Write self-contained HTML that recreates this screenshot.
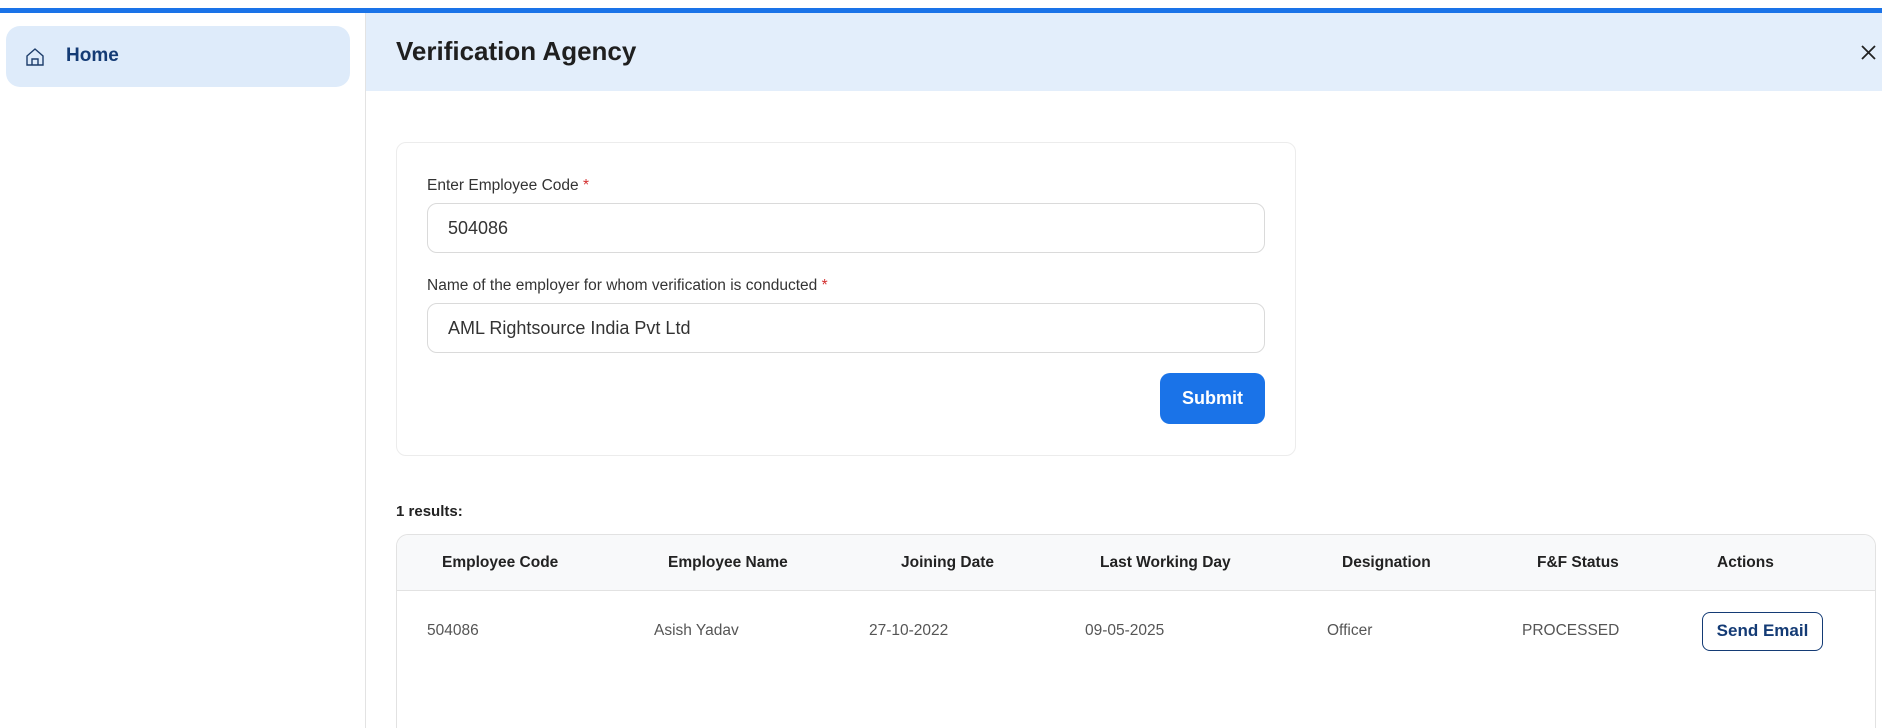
<!DOCTYPE html>
<html style="width:1882px;height:728px;overflow:hidden"><head><style>
*{box-sizing:border-box;margin:0;padding:0}
body{width:1882px;height:728px;background:#fff;font-family:"Liberation Sans",sans-serif;position:relative;overflow:hidden;color:#222}
.a{position:absolute}
</style></head><body>
<div class="a" style="left:0;top:8px;width:1882px;height:5px;background:#1a73e8"></div>
<div class="a" style="left:365px;top:13px;width:1px;height:715px;background:#e3e3e3"></div>
<div class="a" style="left:6px;top:26px;width:344px;height:61px;background:#deebfa;border-radius:14px"></div>
<svg class="a" style="left:24px;top:46px" width="22" height="22" viewBox="0 0 22 22" fill="none" stroke="#1d3d6b" stroke-width="1.4"><path d="M3 10 L11 3 L19 10 V19 H3 Z"/><path d="M8 19 V13 H14 V19"/></svg>
<div class="a" style="left:66px;top:45px;font-size:19px;font-weight:bold;color:#143b75">Home</div>
<div class="a" style="left:366px;top:13px;width:1516px;height:78px;background:#e3eefb"></div>
<div class="a" style="left:396px;top:36px;font-size:26px;font-weight:bold;color:#1f1f1f">Verification Agency</div>
<svg class="a" style="left:1861px;top:45px" width="15" height="15" viewBox="0 0 15 15" stroke="#222" stroke-width="1.8"><path d="M1 1 L14 14 M14 1 L1 14"/></svg>
<div class="a" style="left:396px;top:142px;width:900px;height:314px;border:1px solid #ececec;border-radius:10px"></div>
<div class="a" style="left:427px;top:177px;font-size:15.5px;color:#333">Enter Employee Code <span style="color:#d32f2f">*</span></div>
<div class="a" style="left:427px;top:203px;width:838px;height:50px;border:1px solid #dadada;border-radius:10px;padding:14px 20px;font-size:18px;color:#333">504086</div>
<div class="a" style="left:427px;top:277px;font-size:15.5px;color:#333">Name of the employer for whom verification is conducted <span style="color:#d32f2f">*</span></div>
<div class="a" style="left:427px;top:303px;width:838px;height:50px;border:1px solid #dadada;border-radius:10px;padding:14px 20px;font-size:18px;color:#333">AML Rightsource India Pvt Ltd</div>
<div class="a" style="left:1160px;top:373px;width:105px;height:51px;background:#1a73e8;border-radius:10px;color:#fff;font-weight:bold;font-size:18px;text-align:center;line-height:51px">Submit</div>
<div class="a" style="left:396px;top:503px;font-size:15px;font-weight:bold;color:#222">1 results:</div>
<div class="a" style="left:396px;top:534px;width:1480px;height:194px;border:1px solid #e2e2e2;border-bottom:none;border-radius:12px 12px 0 0;overflow:hidden">
<div style="height:56px;background:#f8f9fa;border-bottom:1px solid #e2e2e2"></div></div>
<div class="a" style="top:554px;left:0;width:1882px;font-size:15.5px;font-weight:bold;color:#222">
<span class="a" style="left:442px">Employee Code</span>
<span class="a" style="left:668px">Employee Name</span>
<span class="a" style="left:901px">Joining Date</span>
<span class="a" style="left:1100px">Last Working Day</span>
<span class="a" style="left:1342px">Designation</span>
<span class="a" style="left:1537px">F&amp;F Status</span>
<span class="a" style="left:1717px">Actions</span>
</div>
<div class="a" style="top:622px;left:0;width:1882px;font-size:15.5px;color:#555">
<span class="a" style="left:427px">504086</span>
<span class="a" style="left:654px">Asish Yadav</span>
<span class="a" style="left:869px">27-10-2022</span>
<span class="a" style="left:1085px">09-05-2025</span>
<span class="a" style="left:1327px">Officer</span>
<span class="a" style="left:1522px">PROCESSED</span>
</div>
<div class="a" style="left:1702px;top:612px;width:121px;height:39px;border:1.5px solid #143b75;border-radius:8px;color:#143b75;font-weight:bold;font-size:17px;text-align:center;line-height:36px">Send Email</div>
</body></html>
